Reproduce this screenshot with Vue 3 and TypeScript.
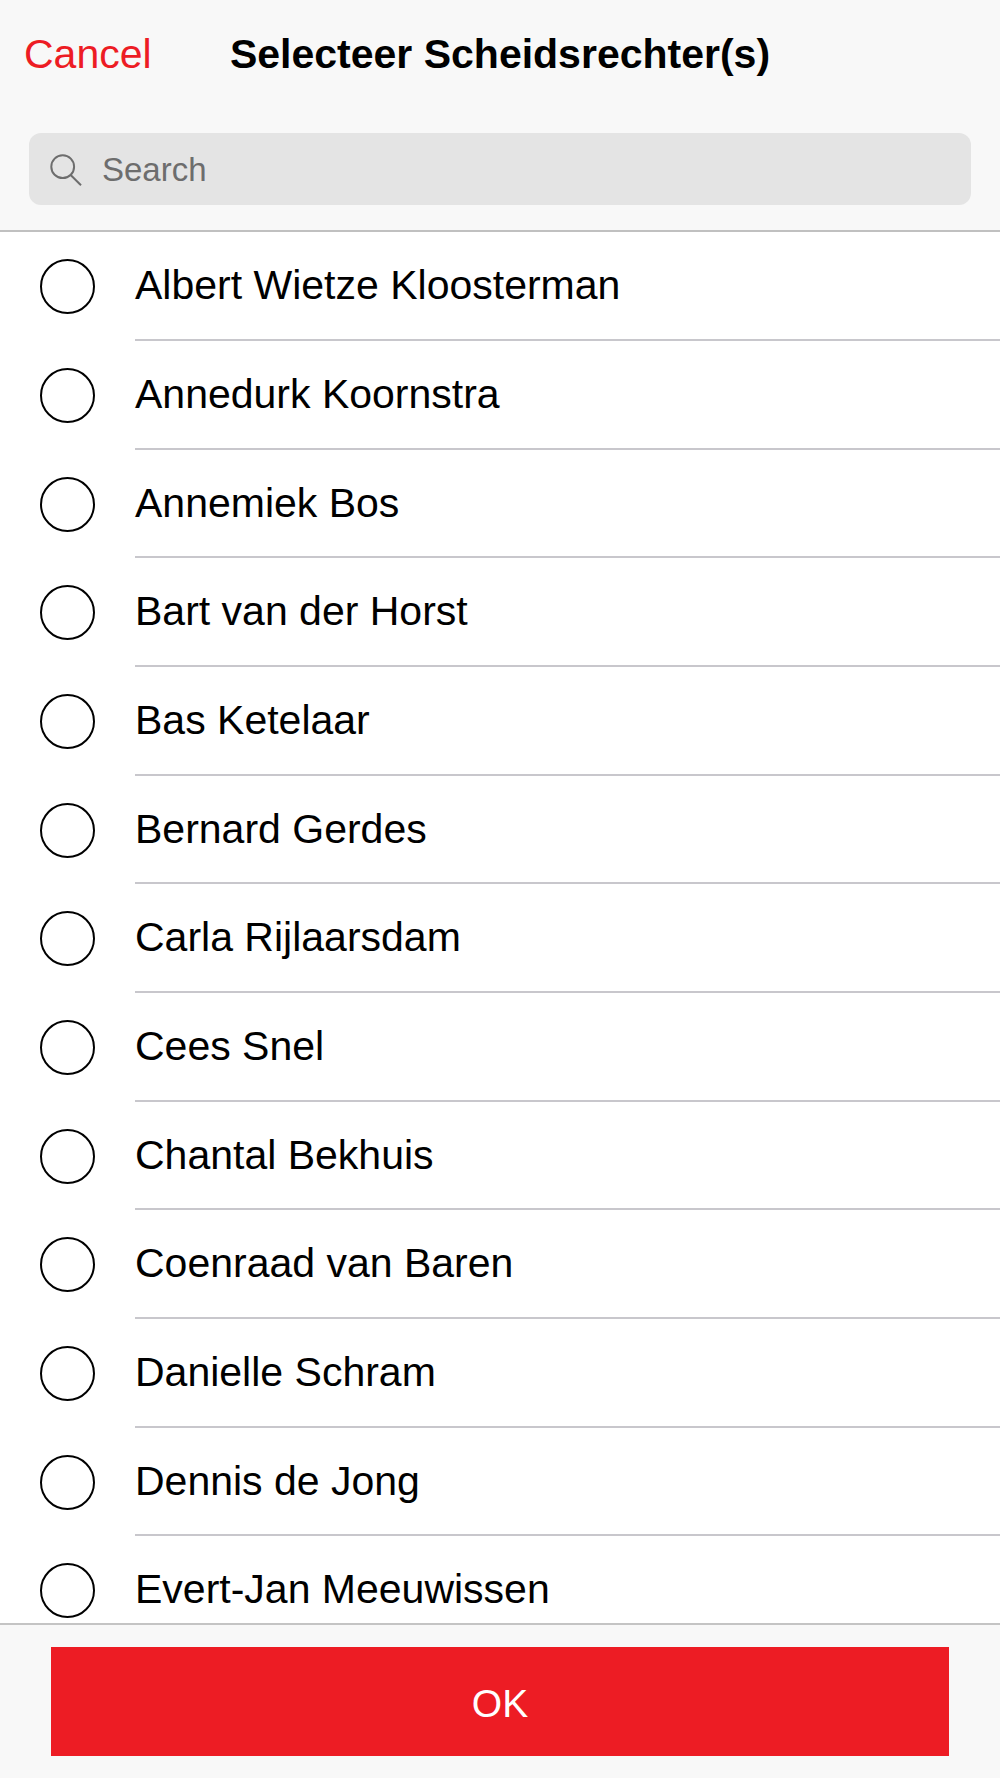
<script setup lang="ts">
import { ref, computed } from 'vue'

const referees: string[] = [
  'Albert Wietze Kloosterman',
  'Annedurk Koornstra',
  'Annemiek Bos',
  'Bart van der Horst',
  'Bas Ketelaar',
  'Bernard Gerdes',
  'Carla Rijlaarsdam',
  'Cees Snel',
  'Chantal Bekhuis',
  'Coenraad van Baren',
  'Danielle Schram',
  'Dennis de Jong',
  'Evert-Jan Meeuwissen',
]

const query = ref('')
const selected = ref<string[]>([])
const visible = computed(() =>
  referees.filter((name) => name.toLowerCase().includes(query.value.toLowerCase())),
)
</script>

<template>
  <div class="screen">
    <header class="header">
      <div class="titlebar">
        <button type="button" class="cancel">Cancel</button>
        <h1 class="title">Selecteer Scheidsrechter(s)</h1>
      </div>
      <label class="search">
        <svg class="search-icon" viewBox="0 0 32 32" aria-hidden="true">
          <circle cx="12.7" cy="12.7" r="11.4" />
          <path d="M20.4 20.8 L31 31.2" />
        </svg>
        <input v-model="query" type="text" placeholder="Search" aria-label="Search" />
      </label>
    </header>

    <main class="list-area">
      <ul class="list">
        <li v-for="name in visible" :key="name">
          <label class="row">
            <input v-model="selected" type="checkbox" class="tick" :value="name" />
            <span class="name">{{ name }}</span>
          </label>
        </li>
      </ul>
    </main>

    <footer class="footer">
      <button type="button" class="ok">OK</button>
    </footer>
  </div>
</template>

<style>
body {
  margin: 0;
}
</style>

<style scoped>
.screen {
  display: flex;
  flex-direction: column;
  height: 100vh;
  background: #fff;
  color: #000;
  font-family: "Liberation Sans", Arial, sans-serif;
}

.header {
  flex: none;
  background: #f8f8f8;
  border-bottom: 2px solid #c0c0c0;
}

.titlebar {
  display: grid;
  grid-template-columns: 1fr auto 1fr;
  align-items: center;
  height: 108px;
}

.cancel {
  justify-self: start;
  padding: 0 0 0 24px;
  border: 0;
  background: none;
  color: #ed1c24;
  font: inherit;
  font-size: 41px;
}

.title {
  margin: 0;
  font-size: 41px;
  font-weight: 700;
  white-space: nowrap;
}

.search {
  display: flex;
  align-items: center;
  gap: 20px;
  box-sizing: border-box;
  height: 72px;
  margin: 25px 29px;
  padding: 2px 21px 0;
  border-radius: 12px;
  background: #e4e4e4;
}

.search-icon {
  flex: none;
  width: 32px;
  height: 32px;
  fill: none;
  stroke: #6d6d6d;
  stroke-width: 2;
}

.search input {
  flex: 1;
  min-width: 0;
  padding: 0;
  border: 0;
  outline: 0;
  background: none;
  color: #000;
  font: inherit;
  font-size: 33px;
}

.search input::placeholder {
  color: #6d6d6d;
  opacity: 1;
}

.list-area {
  flex: 1;
  min-height: 0;
  overflow: hidden;
}

.list {
  margin: 0;
  padding: 0;
  list-style: none;
}

.row {
  display: flex;
  align-items: center;
  gap: 40px;
  padding-left: 40px;
}

.tick {
  flex: none;
  appearance: none;
  box-sizing: border-box;
  width: 55px;
  height: 55px;
  margin: 0;
  border: 2px solid #000;
  border-radius: 50%;
}

.tick:checked {
  border-color: #ed1c24;
  background: #ed1c24;
}

.name {
  flex: 1;
  border-bottom: 2px solid #c8c7cc;
  font-size: 41px;
  line-height: 107px;
}

.list li:nth-child(3n) .name {
  line-height: 106px;
}

.footer {
  flex: none;
  padding: 22px 51px;
  border-top: 2px solid #c4c4c4;
  background: #f8f8f8;
}

.ok {
  display: block;
  box-sizing: border-box;
  width: 100%;
  height: 109px;
  padding: 5px 0 0;
  border: 0;
  background: #ed1c24;
  color: #fff;
  font: inherit;
  font-size: 39px;
}
</style>
